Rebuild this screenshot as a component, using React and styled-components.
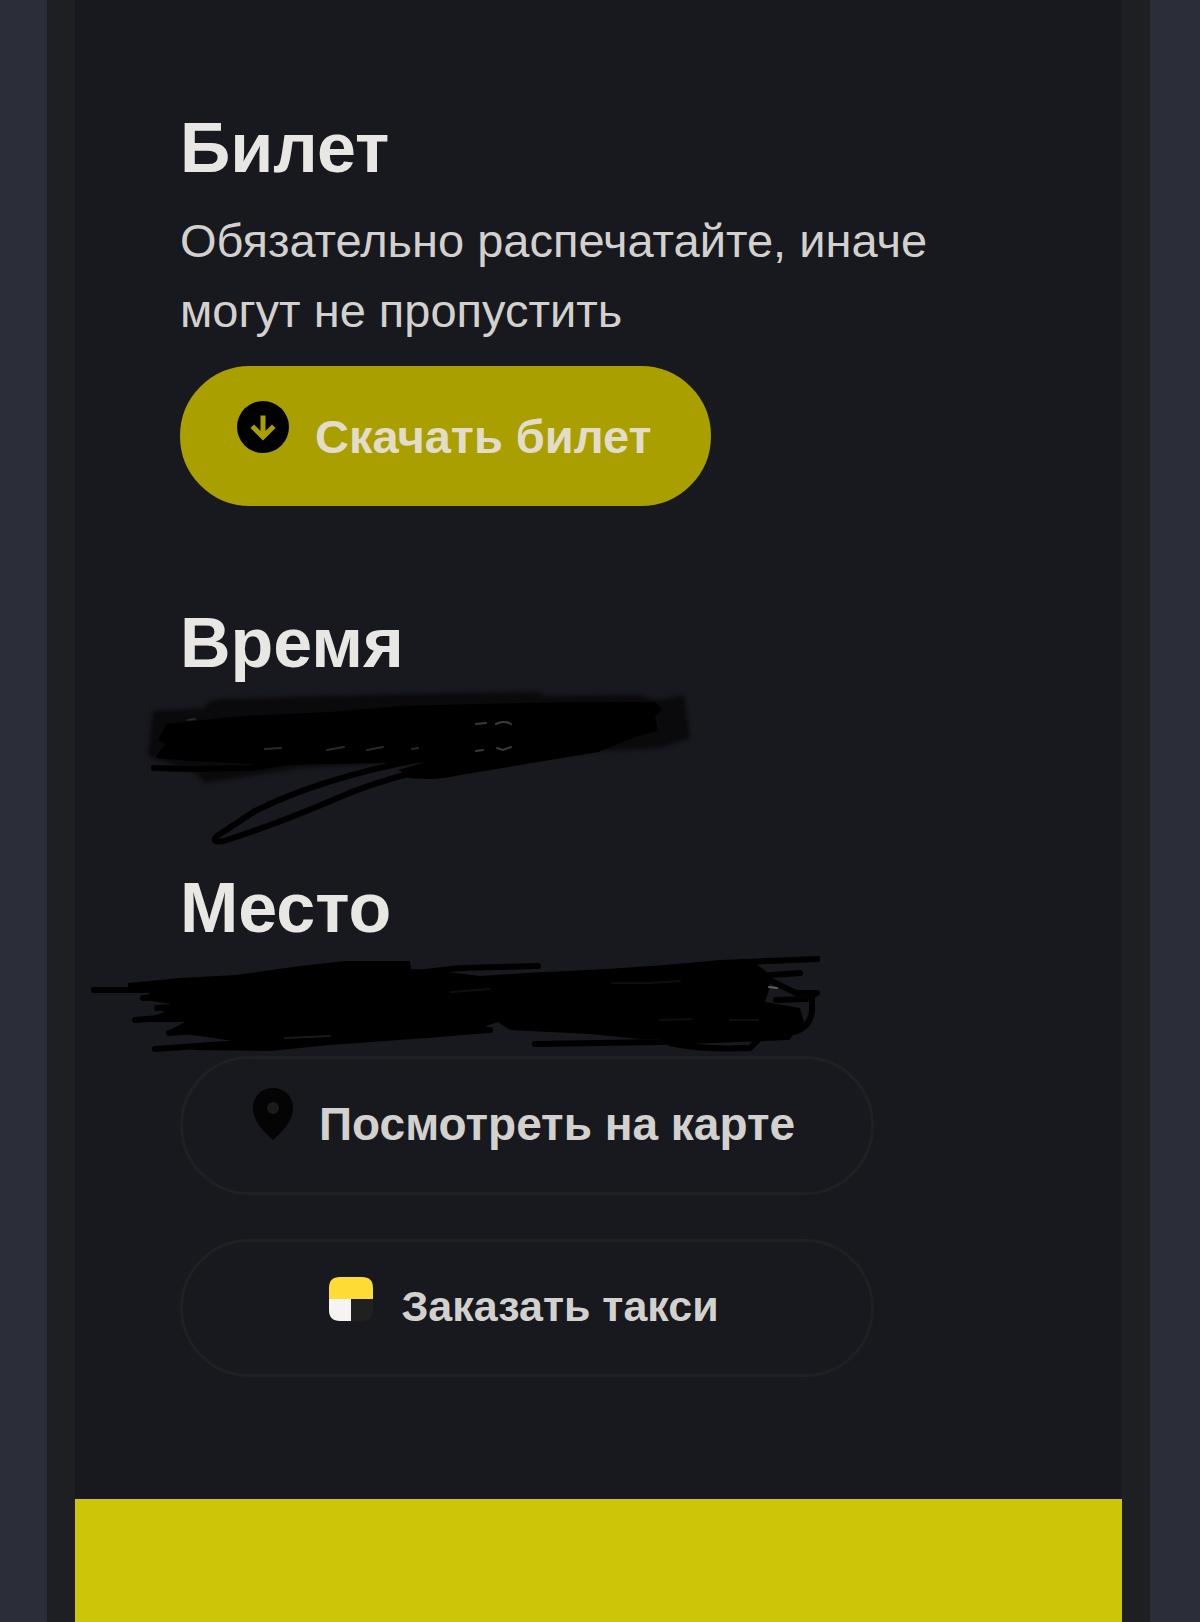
import React from "react";
import styled, { createGlobalStyle } from "styled-components";

const GlobalStyle = createGlobalStyle`
  * {
    box-sizing: border-box;
  }

  body {
    margin: 0;
    background-color: #2b2d39;
    color: #d3d1ce;
    font-family: "Liberation Sans", Arial, Helvetica, sans-serif;
    font-size: 47px;
    line-height: 70px;
  }

  h2, p {
    margin: 0;
  }
`;

const Page = styled.div`
  display: flex;
  min-height: 100vh;
  padding: 0 50px 0 47px;
`;

const Frame = styled.div`
  display: flex;
  flex: 1;
  padding: 0 28px;
  background-color: #1e1f23;
`;

const Card = styled.div`
  display: flex;
  flex: 1;
  flex-direction: column;
  background-color: #18191e;
`;

const Content = styled.main`
  display: flex;
  flex-direction: column;
  gap: 95px;
  padding: 106px 105px 122px;
`;

const Section = styled.section`
  display: flex;
  flex-direction: column;
  align-items: flex-start;
`;

const Title = styled.h2`
  margin-bottom: 16px;
  color: #e9e7e4;
  font-size: 70px;
  font-weight: bold;
  line-height: 84px;
`;

const Actions = styled.div`
  display: flex;
  flex-direction: column;
  gap: 44px;
  margin-top: 20px;
`;

const PillButton = styled.button`
  display: flex;
  justify-content: center;
  align-items: baseline;
  gap: 26px;
  padding: ${(props) => (props.$filled ? "32px 56px 31px 54px" : "29px 76px 33px 70px")};
  border: 3px solid ${(props) => (props.$filled ? "#a9a000" : "#1f2024")};
  border-radius: 70px;
  background-color: ${(props) => (props.$filled ? "#a9a000" : "transparent")};
  color: ${(props) => (props.$filled ? "#e3dccb" : "#d3d1ce")};
  font-family: inherit;
  font-size: ${(props) => props.$size}px;
  font-weight: bold;
  line-height: 70px;
  cursor: pointer;

  svg {
    flex-shrink: 0;
  }
`;

const HiddenLine = styled.div`
  position: relative;
  width: 100%;
  height: 70px;
`;

const Scribble = styled.svg`
  position: absolute;
  left: -100px;
  top: -14px;
  pointer-events: none;
`;

const Marker = styled.path`
  fill: #0a0a0d;
  filter: blur(2px);
`;

const Footer = styled.footer`
  flex: 1;
  min-height: 122px;
  background-color: #cdc507;
`;

const DownloadIcon = () => (
  <svg width="52" height="52" viewBox="0 0 52 52" aria-hidden="true">
    <circle cx="26" cy="26" r="26" fill="#000000" />
    <path
      d="M26 17V35M17 27L26 36L35 27"
      fill="none"
      stroke="#a9a000"
      strokeWidth="5"
      strokeLinecap="square"
      strokeLinejoin="miter"
    />
  </svg>
);

const PinIcon = () => (
  <svg width="40" height="52" viewBox="0 0 40 52" aria-hidden="true">
    <path
      fill="#040405"
      d="M20 0C8 0 0 9 0 20C0 33 10 43 20 52C30 43 40 33 40 20C40 9 32 0 20 0Z"
    />
    <circle cx="20" cy="20" r="6" fill="#1b1b1e" />
  </svg>
);

const TaxiIcon = () => (
  <svg width="46" height="44" viewBox="0 0 46 44" aria-hidden="true">
    <path d="M0 22V11Q0 0 11 0H33Q44 0 44 11V22Z" fill="#ffdc35" />
    <path d="M0 22H22V44H11Q0 44 0 33Z" fill="#f5f4f2" />
    <path d="M22 22H44V33Q44 44 33 44H22Z" fill="#212020" />
  </svg>
);

const TimeScribble = () => (
  <Scribble width="740" height="160" viewBox="80 687 740 160" aria-hidden="true">
    <Marker d="M153 711L204 708Q207 700 222 699L400 694L538 692L544 696L638 695L658 700L684 695L690 738L660 748L600 751L300 768L205 783L194 772L148 756Z" />
    <path
      fill="#000000"
      d="M166 724L240 716L330 712L400 706L520 703L580 702L655 702L662 710L655 716L658 731L636 737L600 751L560 754L520 760L470 770L445 777L412 777L398 770L425 762L280 765L190 761L156 758L160 750L166 744L158 740Z"
    />
    <g
      fill="none"
      stroke="#000000"
      strokeWidth="6"
      strokeLinecap="round"
      strokeLinejoin="round"
    >
      <path d="M154 768L190 769L250 768L300 760" />
      <path d="M440 756Q330 774 255 811L217 836Q210 843 224 841Q280 823 340 797Q390 775 470 761" />
      <path d="M404 774Q430 779 460 772L598 749" />
    </g>
    <g fill="none" stroke="#3a3a39" strokeWidth="2" strokeLinecap="round">
      <path d="M188 720L195 719" stroke="#262626" />
      <path d="M265 749L281 748M327 750L344 747M367 750L383 747M412 749L418 748" stroke="#292928" />
      <path d="M476 724L486 723M496 724Q504 720 511 724" />
      <path d="M476 751L483 750M497 748L503 750L511 747" />
    </g>
  </Scribble>
);

const PlaceScribble = () => (
  <Scribble width="740" height="110" viewBox="80 950 740 110" aria-hidden="true">
    <path
      fill="#000000"
      d="M128 981L180 976L236 973L300 964L345 959L410 959L411 967L440 969L480 974L542 970L600 970L690 962L750 957L768 971L770 985L765 1000L800 1006L804 1020L790 1037L640 1037L590 1032L510 1028L498 1020L486 1024L492 1030L440 1035L330 1043L270 1049L190 1048L240 1040L200 1034L166 1030L185 1020L134 1020L165 1010L155 1006L172 1002L144 998L150 991L128 989Z"
    />
    <g
      fill="none"
      stroke="#000000"
      strokeWidth="6"
      strokeLinecap="round"
      strokeLinejoin="round"
    >
      <path d="M94 988H160" />
      <path d="M143 996L200 992M157 1006L230 1002M135 1018L210 1012M169 1031L240 1025" />
      <path d="M155 1047L240 1041L340 1038L490 1028" />
      <path d="M400 973L460 966L538 964" />
      <path d="M545 973Q640 969 720 961L818 957" />
      <path d="M730 976L800 971" />
      <path d="M765 976L796 991L817 991L806 997L776 998M812 995V1008Q811 1025 794 1030" />
      <path d="M770 1006L797 1014" />
      <path d="M535 1042L660 1040L788 1035" />
      <path d="M670 1041Q700 1048 750 1046L758 1038" />
    </g>
    <g fill="none" stroke="#18191e" strokeWidth="2" strokeLinecap="round">
      <path d="M451 990L490 987M612 981L650 981L680 979M660 1018L692 1017M730 1018L758 1018" stroke="#0e0e11" />
      <path d="M285 1036L330 1034" />
      <path d="M769 985L777 986" stroke="#5f5e59" />
    </g>
  </Scribble>
);

export default function App() {
  return (
    <>
      <GlobalStyle />
      <Page>
        <Frame>
          <Card>
            <Content>
              <Section>
                <Title>Билет</Title>
                <p>Обязательно распечатайте, иначе могут не пропустить</p>
                <Actions>
                  <PillButton type="button" $size={47} $filled>
                    <DownloadIcon />
                    Скачать билет
                  </PillButton>
                </Actions>
              </Section>
              <Section>
                <Title>Время</Title>
                <HiddenLine>
                  <TimeScribble />
                </HiddenLine>
              </Section>
              <Section>
                <Title>Место</Title>
                <HiddenLine>
                  <PlaceScribble />
                </HiddenLine>
                <Actions>
                  <PillButton type="button" $size={46}>
                    <PinIcon />
                    Посмотреть на карте
                  </PillButton>
                  <PillButton type="button" $size={43}>
                    <TaxiIcon />
                    Заказать такси
                  </PillButton>
                </Actions>
              </Section>
            </Content>
            <Footer />
          </Card>
        </Frame>
      </Page>
    </>
  );
}
